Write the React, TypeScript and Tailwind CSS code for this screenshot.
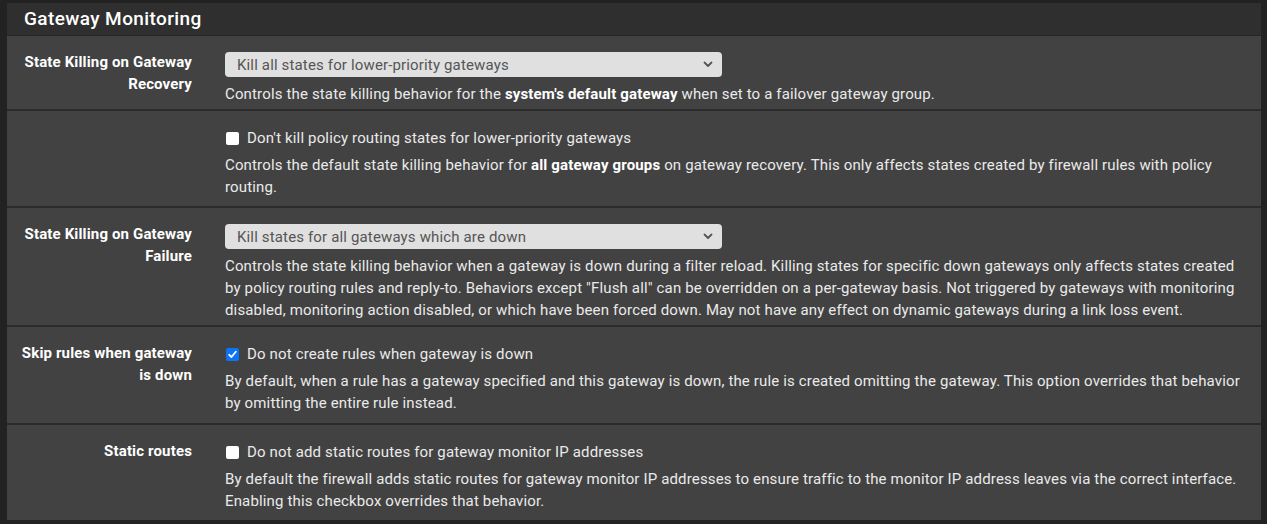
import React from "react";

function Select({ value }: { value: string }) {
  return (
    <div className="flex h-[25px] w-[497px] items-center justify-between rounded-[4px] bg-[#e0e0e0] pl-[12px] pr-[9px] text-[#555555]">
      <span>{value}</span>
      <svg width="10" height="7" viewBox="0 0 10 7" fill="none">
        <path d="M1.5 1.5 L5 5 L8.5 1.5" stroke="#555" strokeWidth="1.8" strokeLinecap="round" strokeLinejoin="round" />
      </svg>
    </div>
  );
}

function Check({ checked, label }: { checked?: boolean; label: string }) {
  return (
    <div className="flex h-[22px] items-center">
      {checked ? (
        <span className="ml-[1px] flex h-[13px] w-[13px] items-center justify-center rounded-[2px] bg-[#0b74f5]">
          <svg width="9" height="9" viewBox="0 0 9 9" fill="none">
            <path d="M1.2 4.8 L3.5 7 L7.8 1.8" stroke="#fff" strokeWidth="1.8" strokeLinecap="round" strokeLinejoin="round" />
          </svg>
        </span>
      ) : (
        <span className="ml-[1px] h-[13px] w-[13px] rounded-[2px] bg-white" />
      )}
      <span className="ml-[8px]">{label}</span>
    </div>
  );
}

function Row({
  label,
  children,
  labelPad,
  bodyPad,
  last,
}: {
  label?: React.ReactNode;
  children: React.ReactNode;
  labelPad: string;
  bodyPad: string;
  last?: boolean;
}) {
  return (
    <div className={`flex ${last ? "" : "border-b-2 border-[#2b2b2b]"}`}>
      <div className={`w-[218px] shrink-0 pr-[33px] text-right font-bold text-white ${labelPad}`}>{label}</div>
      <div className={`flex flex-1 flex-col pr-[15px] ${bodyPad}`}>{children}</div>
    </div>
  );
}

export default function App() {
  return (
    <div
      className="min-h-screen bg-[#222222] pl-[7px] pr-[6px] pt-[3px] text-[15px] leading-[22px] tracking-[0.15px] text-[#eaeaea]"
      style={{ fontFamily: "Roboto, 'Liberation Sans', sans-serif" }}
    >
      <div className="bg-[#424242]">
        <div className="flex h-[33px] items-center border-b border-[#252525] bg-[#2f2f2f] pl-[17px] text-[19px] font-medium tracking-[0.4px] text-white">
          Gateway Monitoring
        </div>

        <Row
          labelPad="pt-[15px]"
          bodyPad="gap-[6px] pt-[16px] pb-[4px]"
          label={
            <>
              State Killing on Gateway
              <br />
              Recovery
            </>
          }
        >
          <Select value="Kill all states for lower-priority gateways" />
          <p>
            Controls the state killing behavior for the <b className="text-white">system's default gateway</b> when set
            to a failover gateway group.
          </p>
        </Row>

        <Row labelPad="pt-[15px]" bodyPad="gap-[5px] pt-[16px] pb-[8px]">
          <Check label="Don't kill policy routing states for lower-priority gateways" />
          <p>
            Controls the default state killing behavior for <b className="text-white">all gateway groups</b> on gateway
            recovery. This only affects states created by firewall rules with policy routing.
          </p>
        </Row>

        <Row
          labelPad="pt-[15px]"
          bodyPad="gap-[6px] pt-[16px] pb-[4px]"
          label={
            <>
              State Killing on Gateway
              <br />
              Failure
            </>
          }
        >
          <Select value="Kill states for all gateways which are down" />
          <p>
            Controls the state killing behavior when a gateway is down during a filter reload. Killing states for
            specific down gateways only affects states created by policy routing rules and reply-to. Behaviors except
            "Flush all" can be overridden on a per-gateway basis. Not triggered by gateways with monitoring disabled,
            monitoring action disabled, or which have been forced down. May not have any effect on dynamic gateways
            during a link loss event.
          </p>
        </Row>

        <Row
          labelPad="pt-[15px]"
          bodyPad="gap-[5px] pt-[16px] pb-[9px]"
          label={
            <>
              Skip rules when gateway
              <br />
              is down
            </>
          }
        >
          <Check checked label="Do not create rules when gateway is down" />
          <p>
            By default, when a rule has a gateway specified and this gateway is down, the rule is created omitting the
            gateway. This option overrides that behavior by omitting the entire rule instead.
          </p>
        </Row>

        <Row labelPad="pt-[15px]" bodyPad="gap-[5px] pt-[16px] pb-[8px]" label="Static routes" last>
          <Check label="Do not add static routes for gateway monitor IP addresses" />
          <p>
            By default the firewall adds static routes for gateway monitor IP addresses to ensure traffic to the monitor
            IP address leaves via the correct interface. Enabling this checkbox overrides that behavior.
          </p>
        </Row>
      </div>
    </div>
  );
}
